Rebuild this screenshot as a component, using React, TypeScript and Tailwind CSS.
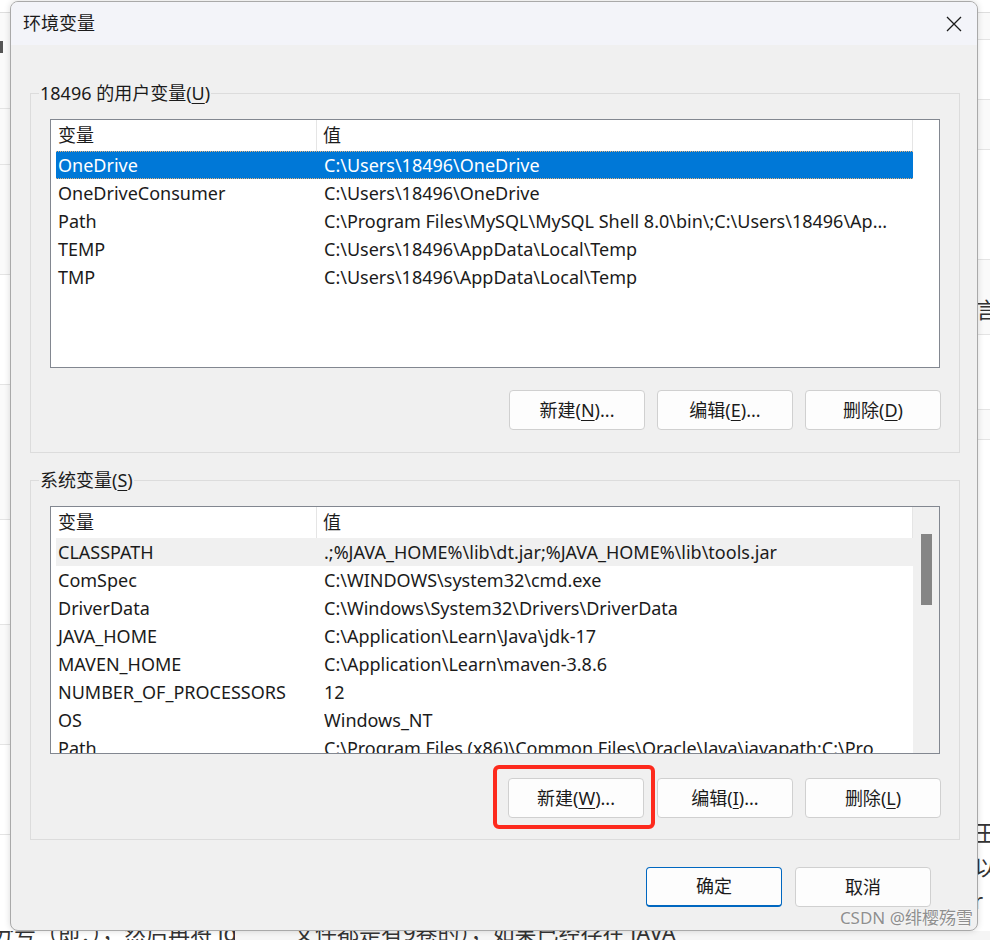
import React from 'react';

const userVars: [string, string][] = [
  ['OneDrive', 'C:\\Users\\18496\\OneDrive'],
  ['OneDriveConsumer', 'C:\\Users\\18496\\OneDrive'],
  ['Path', 'C:\\Program Files\\MySQL\\MySQL Shell 8.0\\bin\\;C:\\Users\\18496\\Ap...'],
  ['TEMP', 'C:\\Users\\18496\\AppData\\Local\\Temp'],
  ['TMP', 'C:\\Users\\18496\\AppData\\Local\\Temp'],
];

const sysVars: [string, string][] = [
  ['CLASSPATH', '.;%JAVA_HOME%\\lib\\dt.jar;%JAVA_HOME%\\lib\\tools.jar'],
  ['ComSpec', 'C:\\WINDOWS\\system32\\cmd.exe'],
  ['DriverData', 'C:\\Windows\\System32\\Drivers\\DriverData'],
  ['JAVA_HOME', 'C:\\Application\\Learn\\Java\\jdk-17'],
  ['MAVEN_HOME', 'C:\\Application\\Learn\\maven-3.8.6'],
  ['NUMBER_OF_PROCESSORS', '12'],
  ['OS', 'Windows_NT'],
  ['Path', 'C:\\Program Files (x86)\\Common Files\\Oracle\\Java\\javapath;C:\\Pro'],
];

const font = { fontFamily: '"Noto Sans", "Noto Sans CJK SC", sans-serif' };

const Btn: React.FC<{ pre: string; k: string; post?: string; primary?: boolean }> = ({ pre, k, post = '', primary }) => (
  <button
    className={
      'w-[136px] h-[40px] shrink-0 rounded-[4px] bg-[#fdfdfd] text-[18px] text-[#1b1b1b] flex items-center justify-center ' +
      (primary ? 'border border-[#0067c0] border-b-2' : 'border border-[#d0d0d0]')
    }
  >
    {pre}
    {k && (
      <>
        (<span className="underline underline-offset-[3px]">{k}</span>)
      </>
    )}
    {post}
  </button>
);

const Row: React.FC<{ name: string; value: string; selected?: boolean; hover?: boolean }> = ({ name, value, selected, hover }) => (
  <div
    className={
      'flex h-[28px] shrink-0 items-center ml-[5px] whitespace-nowrap ' +
      (selected
        ? 'bg-[#0078d7] text-white border-y border-dotted border-[#e9b27a]'
        : hover
        ? 'bg-[#f0f0f0] text-[#1b1b1b]'
        : 'text-[#1b1b1b]')
    }
  >
    <div className="w-[268px] pl-[2px] shrink-0 overflow-hidden">{name}</div>
    <div className="overflow-hidden">{value}</div>
  </div>
);

const ListHeader: React.FC = () => (
  <div className="flex h-[31px] items-center text-[#1b1b1b] shrink-0">
    <div className="w-[266px] pl-[7px] h-full flex items-center border-r border-[#e5e5e5]">变量</div>
    <div className="flex-1 pl-[6px] h-full flex items-center border-r border-[#e5e5e5]">值</div>
  </div>
);

const App: React.FC = () => {
  return (
    <div className="w-[990px] h-[940px] overflow-hidden bg-white flex flex-col text-[18px]" style={font}>
      <div className="flex h-[931px] shrink-0">
        {/* left strip of the page behind */}
        <div className="w-[10px] shrink-0 bg-[#fafafa] flex flex-col">
          <div className="h-[13px] bg-white border-b border-[#dedede]" />
          <div className="h-[28px]" />
          <div className="h-[12px] w-[3px] bg-[#555]" />
          <div className="h-[56px] border-b border-[#e4e4e4]" />
          <div className="h-[56px] border-b border-[#e4e4e4]" />
          <div className="h-[110px] border-b border-[#e4e4e4]" />
          <div className="h-[110px] border-b border-[#e4e4e4] bg-white" />
          <div className="h-[135px] border-b border-[#e4e4e4]" />
          <div className="h-[105px] border-b border-[#e4e4e4] bg-white" />
          <div className="h-[120px] border-b border-[#e4e4e4]" />
          <div className="h-[90px] border-b border-[#e4e4e4] bg-white" />
          <div className="flex-1 bg-white" />
        </div>

        {/* dialog */}
        <div className="w-[968px] h-[930px] mt-[1px] shrink-0 rounded-[8px] border border-[#a9a9a9] bg-[#f0f0f0] flex flex-col overflow-hidden shadow-[0_0_6px_rgba(0,0,0,0.15)] relative">
          <div className="h-[43px] shrink-0 bg-[#f3f4f9] flex items-center justify-between pl-[12px] pr-[14px]">
            <span className="text-[18px] text-[#1b1b1b]">环境变量</span>
            <svg width="16" height="16" viewBox="0 0 16 16" className="mr-[1px]">
              <path d="M1 1 L15 15 M15 1 L1 15" stroke="#1b1b1b" strokeWidth="1.3" fill="none" />
            </svg>
          </div>

          <div className="flex flex-col pl-[19px] pr-[17px]">
            {/* user variables */}
            <fieldset className="mt-[36px] border border-[#dcdcdc] px-[19px] pb-[22px]">
              <legend className="-ml-[11px] px-[1px] leading-[24px] text-[#1b1b1b]">
                18496 的用户变量(<span className="underline underline-offset-[3px]">U</span>)
              </legend>
              <div className="mt-[14px] h-[249px] bg-white border border-[#828790] flex flex-col overflow-hidden">
                <div className="flex flex-col w-[862px]">
                  <ListHeader />
                  {userVars.map(([n, v], i) => (
                    <Row key={n + i} name={n} value={v} selected={i === 0} />
                  ))}
                </div>
              </div>
              <div className="flex justify-end gap-[12px] mt-[22px] mr-[-1px]">
                <Btn pre="新建" k="N" post="..." />
                <Btn pre="编辑" k="E" post="..." />
                <Btn pre="删除" k="D" />
              </div>
            </fieldset>

            {/* system variables */}
            <fieldset className="mt-[15px] border border-[#dcdcdc] px-[19px] pb-[21px]">
              <legend className="-ml-[11px] px-[1px] leading-[24px] text-[#1b1b1b]">
                系统变量(<span className="underline underline-offset-[3px]">S</span>)
              </legend>
              <div className="mt-[14px] h-[248px] bg-white border border-[#828790] flex overflow-hidden">
                <div className="flex flex-col w-[862px] shrink-0">
                  <ListHeader />
                  {sysVars.map(([n, v], i) => (
                    <Row key={n + i} name={n} value={v} hover={i === 0} />
                  ))}
                </div>
                <div className="flex-1 bg-[#f0f0f0] pt-[27px] pl-[8px]">
                  <div className="w-[11px] h-[71px] bg-[#858585]" />
                </div>
              </div>
              <div className="flex justify-end gap-[12px] mt-[24px] mr-[-1px]">
                <div className="rounded-[6px] border-[4px] border-[#fd2a1d] -mt-[13px] -mb-[11px] -ml-[15px] -mr-[10px] pt-[9px] pb-[7px] pl-[11px] pr-[7px] flex">
                  <Btn pre="新建" k="W" post="..." />
                </div>
                <Btn pre="编辑" k="I" post="..." />
                <Btn pre="删除" k="L" />
              </div>
            </fieldset>

            <div className="flex justify-end gap-[13px] mt-[27px] mr-[29px]">
              <Btn pre="确定" k="" primary />
              <Btn pre="取消" k="" />
            </div>
          </div>

          <div className="absolute right-[4px] bottom-[0px] text-[17px] text-[#8f8f8f] [text-shadow:0_0_2px_white]">
            CSDN @绯樱殇雪
          </div>
        </div>

        {/* right strip of the page behind */}
        <div className="flex-1 bg-[#fafafa] flex flex-col text-[22px] text-[#333] overflow-hidden">
          <div className="h-[13px] bg-white border-b border-[#dedede]" />
          <div className="h-[27px] border-b border-[#e4e4e4]" />
          <div className="h-[60px] border-b border-[#e4e4e4] bg-white" />
          <div className="h-[50px] border-b border-[#e4e4e4]" />
          <div className="h-[110px] border-b border-[#e4e4e4] bg-white" />
          <div className="h-[75px] border-b border-[#e4e4e4] -ml-[2px] leading-[22px] pt-[38px]">言</div>
          <div className="h-[75px] border-b border-[#e4e4e4] bg-white" />
          <div className="h-[30px] border-b border-[#e4e4e4]" />
          <div className="flex-1 bg-white pt-[375px] -ml-[4px] leading-[34px]">
            <div>王</div>
            <div>以</div>
            <div>r</div>
          </div>
        </div>
      </div>

      {/* bottom strip of the page behind */}
      <div className="flex h-[9px] overflow-hidden text-[22px] text-[#333] leading-[26px] whitespace-nowrap">
        <div className="w-[235px] bg-white -mt-[12px] shrink-0 overflow-hidden">
          <div className="-ml-[8px]">分号（即：），然后再将 jdk 的路径</div>
        </div>
        <div className="flex-1 bg-[#f5f5f5] -mt-[12px] pl-[58px] overflow-hidden">文件都是有9卷的），如果已经存在 JAVA</div>
      </div>
    </div>
  );
};

export default App;
